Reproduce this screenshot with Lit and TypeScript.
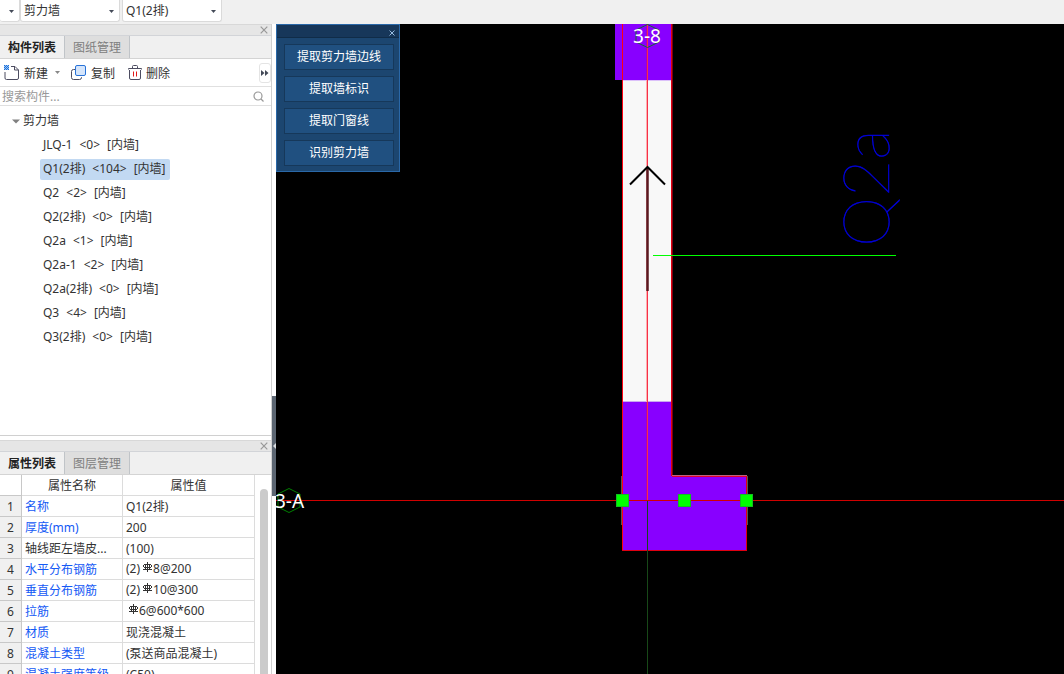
import { LitElement, html, css, svg, nothing } from "lit";
import { customElement, property, state } from "lit/decorators.js";
import { classMap } from "lit/directives/class-map.js";

const closeIcon = html`<svg width="8" height="8" viewBox="0 0 8 8" aria-hidden="true">
  <path d="M.7 .7L7.3 7.3M7.3 .7L.7 7.3" fill="none" stroke="currentColor" stroke-width="1.2" />
</svg>`;

const newIcon = html`<svg width="16" height="16" viewBox="0 0 16 16" aria-hidden="true">
  <path d="M7 1.5H11L14.5 5V13Q14.5 14.5 13 14.5H2.500Q1 14.500 1 13V7" fill="none" stroke="#4c4c60" />
  <path d="M10.500 1.500V5H14.500" fill="none" stroke="#4c4c60" />
  <rect width="5" height="5" fill="#9cc4f4" />
  <path d="M0 0h1v1h-1zM2 0h1v1h-1zM4 0h1v1h-1zM1 1h1v1h-1zM3 1h1v1h-1zM0 2h1v1h-1zM2 2h1v1h-1zM4 2h1v1h-1zM1 3h1v1h-1zM3 3h1v1h-1zM0 4h1v1h-1zM2 4h1v1h-1zM4 4h1v1h-1z" fill="#1a6fd8" />
</svg>`;

const copyIcon = html`<svg width="16" height="16" viewBox="0 0 16 16" aria-hidden="true">
  <path d="M4 4.500H2.500Q.5 4.500 .5 6.500V12.500Q.5 14.500 2.500 14.500H8.500Q10.500 14.500 10.500 12.500V12" fill="none" stroke="#4c4c60" />
  <rect x="4.500" y=".5" width="10" height="10" rx="1.500" fill="#d5e5fb" stroke="#2872d8" />
</svg>`;

const deleteIcon = html`<svg width="14" height="16" viewBox="0 0 14 16" aria-hidden="true">
  <path d="M.5 4.500V3.500H13.500V4.500M4.500 3V1.500Q4.500 .5 5.500 .5H8.500Q9.500 .5 9.500 1.500V3M1.500 5V13Q1.500 14.500 3 14.500H11Q12.500 14.500 12.500 13V5" fill="none" stroke="#4c4c60" />
  <path d="M5.500 6.500V11.500M8.500 6.500V11.500" stroke="#e01818" fill="none" />
</svg>`;

const rebarIcon = html`<svg class="rebar" width="9" height="10" viewBox="0 0 9 10" role="img" aria-label="HRB400">
  <path d="M4.500 0V10M2.500 2V8M6.500 2V8M0 7.500H9M1 2.500H8M1 5.500H8M.5 3V5M8.500 3V5" fill="none" stroke="#333" />
</svg>`;

@customElement("dock-title")
class DockTitle extends LitElement {
  @property({ type: Array }) tabs: string[] = [];
  @state() private active = 0;

  static styles = css`
    :host { display: block; flex: none; }
    .bar { display: flex; justify-content: flex-end; align-items: center; height: 12px; box-sizing: border-box; padding-right: 3px; background: #e6e6e6; border-top: 1px solid #d8d8d8; border-bottom: 1px solid #d2d4d8; }
    .close { display: flex; border: 0; padding: 0; background: none; color: #989898; }
    .tabs { display: flex; height: 23px; background: #f0f0f0; border-bottom: 1px solid #d4d4d4; box-sizing: border-box; }
    .tab { width: 65px; border: 0; border-right: 1px solid #c0c4c8; padding: 2px 0 0; background: #dedede; color: #808080; font: 12px/18px "Noto Sans", "Noto Sans CJK SC", sans-serif; white-space: nowrap; }
    .tab.on { background: #f0f0f0; color: #222; font-weight: 700; }
  `;

  render() {
    return html`
      <div class="bar"><button class="close" aria-label="关闭">${closeIcon}</button></div>
      <div class="tabs" role="tablist">
        ${this.tabs.map((t, i) => html`<button role="tab" aria-selected=${i === this.active}
          class=${classMap({ tab: true, on: i === this.active })} @click=${() => (this.active = i)}>${t}</button>`)}
      </div>`;
  }
}

interface Row { name: string; value: string; prefix?: string; rebar?: boolean; plain?: boolean }

const rows: Row[] = [
  { name: "名称", value: "Q1(2排)" },
  { name: "厚度(mm)", value: "200" },
  { name: "轴线距左墙皮...", value: "(100)", plain: true },
  { name: "水平分布钢筋", prefix: "(2)", rebar: true, value: "8@200" },
  { name: "垂直分布钢筋", prefix: "(2)", rebar: true, value: "10@300" },
  { name: "拉筋", rebar: true, value: "6@600*600" },
  { name: "材质", value: "现浇混凝土" },
  { name: "混凝土类型", value: "(泵送商品混凝土)" },
  { name: "混凝土强度等级", value: "(C50)" },
];

const walls: [string, number][] = [
  ["JLQ-1", 0], ["Q1(2排)", 104], ["Q2", 2], ["Q2(2排)", 0], ["Q2a", 1],
  ["Q2a-1", 2], ["Q2a(2排)", 0], ["Q3", 4], ["Q3(2排)", 0],
];

@customElement("drawing-view")
class DrawingView extends LitElement {
  static styles = css`
    :host { display: block; min-width: 0; overflow: hidden; background: #000; }
    .sheet { display: block; width: 100%; height: 100%; }
    .axis { font: 19px "Noto Sans", "Noto Sans CJK SC", sans-serif; fill: #fff; }
    .mark { font: 100 64px Lato, sans-serif; fill: #0000e0; stroke: #0000e0; stroke-width: .5; }
  `;

  render() {
    return html`<svg class="sheet" role="img" aria-label="剪力墙平面图">
      <g shape-rendering="crispEdges">
        <path d="M339 0H396V56H339Z" fill="#8800ff" />
        <path d="M346 56H396V378H346Z" fill="#f8f8f8" />
        <path d="M346 378H396V452H470V526H346Z" fill="#8800ff" />
        <path d="M346 377.500H396" stroke="#c9a8f0" />
        <path d="M346 56.500H396" stroke="#dcc0fa" />
        <path d="M345.500 452V501M471.500 452V501" stroke="#555" />
        <path d="M346.500 0V526" stroke="#ff0010" />
        <path d="M395.500 0V452" stroke="#e00010" />
        <path d="M396.500 0V452" stroke="#780010" />
        <path d="M396 451.500H471" stroke="#c06080" />
        <path d="M396 452.500H471" stroke="#e00030" />
        <path d="M470.500 452V527M346 526.500H471" stroke="#e00010" fill="none" />
        <path d="M0 476.500H2000" stroke="#d00000" />
        <path d="M370.500 56V378" stroke="#fcb0b0" />
        <path d="M370.500 0V56M370.500 378V476" stroke="#a800c0" />
        <path d="M371.500 0V476" stroke="#f83048" />
        <path d="M371.500 477V2000" stroke="#184818" />
        <path d="M377 231.500H620" stroke="#00ff00" />
      </g>
      <path d="M371.500 144V267" stroke="#5a1820" stroke-width="2.500" />
      <path d="M354 160.500L371.500 143L389 160.500" stroke="#000" stroke-width="2" fill="none" />
      <path d="M371.500 .5L383 6V18L371.500 23.500L360 18V6Z" stroke="#107030" fill="none" />
      <path d="M13 464.500L24 470V483L13 488.500L2 483V470Z" stroke="#008000" fill="none" />
      ${[346, 408, 470].map(x => svg`<rect x=${x - 5.5} y="470.5" width="12" height="12" fill="#00ff00" stroke="#10c020" />`)}
      <text class="axis" x="371" y="19" text-anchor="middle">3-8</text>
      <text class="axis" x="-1" y="484">3-A</text>
      <text class="mark" transform="translate(613 223) rotate(-90)">Q2a</text>
    </svg>`;
  }
}

@customElement("app-root")
class AppRoot extends LitElement {
  @state() private selected = 1;

  static styles = css`
    :host { display: flex; flex-direction: column; height: 100vh; overflow: hidden; background: #f0f0f0; color: #333; font: 12px/18px "Noto Sans", "Noto Sans CJK SC", sans-serif; }
    button, input, select { font: inherit; color: inherit; }
    .top { display: flex; gap: 2px; height: 24px; flex: none; }
    .pick { display: grid; width: 100px; height: 22px; }
    .pick.short { width: 18px; }
    .pick > * { grid-area: 1 / 1; }
    .pick select { appearance: none; width: 100%; min-width: 0; box-sizing: border-box; padding: 0 16px 0 3px; border: 1px solid #dadada; border-top: 0; border-radius: 0 0 3px 3px; background: #fff; outline: 0; }
    .pick svg { justify-self: end; align-self: center; margin-right: 6px; pointer-events: none; }
    .pick.short select { border-left: 0; }
    .main { display: flex; flex: 1; min-height: 0; }
    .side { display: flex; flex-direction: column; width: 271px; flex: none; gap: 4px; background: #fff; border-right: 1px solid #d0d0d0; }
    .panel { display: flex; flex-direction: column; background: #fff; }
    .components { height: 412px; flex: none; box-sizing: border-box; border-bottom: 1px solid #d0d0d0; }
    .props { flex: 1; min-height: 0; }
    .tools { display: flex; align-items: center; height: 28px; box-sizing: border-box; padding: 0 0 0 4px; border-bottom: 1px solid #e0e0e0; }
    .tool { display: flex; align-items: center; gap: 4px; border: 0; padding: 0; background: none; }
    .tool span { padding-top: 2px; }
    .tool.new { margin-right: 11px; }
    .tool.copy { margin-right: 13px; }
    .tool.new > svg:last-child { margin-left: 3px; }
    .more { display: grid; place-items: center; margin-left: auto; width: 12px; height: 20px; padding: 0; border: 1px solid #e4e4e4; border-radius: 3px; background: #fff; }
    .search { display: flex; align-items: center; height: 19px; box-sizing: border-box; padding: 0 7px 0 2px; border-bottom: 1px solid #e0e0e0; }
    .search input { flex: 1; min-width: 0; border: 0; padding: 2px 0 0; outline: 0; background: none; height: 18px; box-sizing: border-box; }
    .search input::placeholder { color: #999; opacity: 1; }
    .tree { list-style: none; margin: 0; padding: 3px 0 0 12px; }
    .root { display: flex; align-items: center; gap: 3px; height: 24px; border: 0; padding: 0; background: none; }
    .kids { list-style: none; margin: 0; padding: 0 0 0 28px; }
    .kids li { height: 24px; display: flex; align-items: center; }
    .item { height: 21px; border: 0; border-radius: 2px; padding: 0 4px 0 3px; background: none; white-space: nowrap; display: flex; align-items: center; gap: 7px; }
    .item.on { background: #c2d9f2; }
    .sheet { display: flex; flex: 1; min-height: 0; overflow: hidden; align-items: flex-start; }
    .grid { width: 255px; table-layout: fixed; border-collapse: separate; border-spacing: 0; }
    .grid th, .grid td { box-sizing: border-box; height: 21px; padding: 2px 0 0 3px; font-weight: 400; text-align: left; white-space: nowrap; overflow: hidden; border: solid #dcdcdc; border-width: 0 1px 1px 0; }
    .grid thead th { text-align: center; padding: 2px 0 0; }
    .grid .num { width: 22px; padding: 2px 0 0; text-align: center; border-color: #c8c8c8; }
    .grid tbody .num { background: #f0f0f0; }
    .grid .name { width: 101px; }
    .grid tbody .name { color: #1459f5; }
    .grid tbody .name.plain { color: #333; }
    .grid .steel { padding-top: 0; }
    .rebar { margin: 0 1px 0 3px; vertical-align: 1px; }
    .thumb { width: 8px; margin: 14px 0 0 5px; align-self: stretch; border-radius: 4px 4px 0 0; background: #cbcbcb; }
    .split { flex: none; width: 4px; background: #fff; }
    .grip { display: grid; place-items: center end; width: 4px; height: 100px; margin-top: 372px; border: 0; padding: 0; background: #5c6672; }
    .stage { display: grid; flex: 1; min-width: 0; grid-template: 1fr / 1fr; }
    .stage > * { grid-area: 1 / 1; }
    .float { align-self: start; justify-self: start; z-index: 1; width: 124px; box-sizing: border-box; border: 1px solid #2a68a8; background: #1c4670; }
    .cap { display: flex; justify-content: flex-end; align-items: center; height: 13px; padding: 3px 4px 0 0; box-sizing: border-box; background: #17375a; border-bottom: 1px solid #102c48; }
    .cap button { display: flex; border: 0; padding: 0; background: none; color: #a8cdf0; }
    .cap svg { width: 6px; height: 6px; }
    .acts { display: grid; gap: 6px; padding: 6px 5px 5px 7px; }
    .acts button { height: 26px; padding: 0; border: 1px solid #16385a; background: #205080; color: #fff; }
  `;

  private arrow(color = "#444a58") {
    return html`<svg width="5" height="3" viewBox="0 0 5 3" aria-hidden="true"><path d="M0 0H5L2.500 3Z" fill=${color} /></svg>`;
  }

  private pick(label: string, text: string) {
    return html`<div class=${classMap({ pick: true, short: !text })}>
      <select aria-label=${label}><option>${text}</option></select>${this.arrow()}
    </div>`;
  }

  render() {
    return html`
      <header class="top">${this.pick("类别", "")}${this.pick("构件类型", "剪力墙")}${this.pick("构件", "Q1(2排)")}</header>
      <main class="main">
        <aside class="side">
          <section class="panel components">
            <dock-title .tabs=${["构件列表", "图纸管理"]}></dock-title>
            <div class="tools">
              <button class="tool new">${newIcon}<span>新建</span>${this.arrow("#888")}</button>
              <button class="tool copy">${copyIcon}<span>复制</span></button>
              <button class="tool">${deleteIcon}<span>删除</span></button>
              <button class="more" aria-label="更多">
                <svg width="8" height="6" viewBox="0 0 8 6" aria-hidden="true"><path d="M0 0L3.500 3L0 6ZM4 0L7.500 3L4 6Z" fill="#444a58" /></svg>
              </button>
            </div>
            <div class="search">
              <input type="text" aria-label="搜索构件" placeholder="搜索构件..." />
              <svg width="11" height="11" viewBox="0 0 11 11" aria-hidden="true"><circle cx="5" cy="5" r="4" fill="none" stroke="#999" stroke-width="1.200" /><path d="M8 8L10.500 10.500" stroke="#999" stroke-width="1.200" /></svg>
            </div>
            <ul class="tree">
              <li>
                <button class="root"><svg width="8" height="5" viewBox="0 0 8 5" aria-hidden="true"><path d="M0 .5H8L4 4.500Z" fill="#808080" /></svg>剪力墙</button>
                <ul class="kids">
                  ${walls.map(([name, count], i) => html`<li><button class=${classMap({ item: true, on: i === this.selected })}
                    @click=${() => (this.selected = i)}><span>${name}</span><span>&lt;${count}&gt;</span><span>[内墙]</span></button></li>`)}
                </ul>
              </li>
            </ul>
          </section>
          <section class="panel props">
            <dock-title .tabs=${["属性列表", "图层管理"]}></dock-title>
            <div class="sheet">
              <table class="grid">
                <thead><tr><th class="num"></th><th class="name">属性名称</th><th>属性值</th></tr></thead>
                <tbody>
                  ${rows.map((r, i) => html`<tr>
                    <th class="num" scope="row">${i + 1}</th>
                    <td class=${classMap({ name: true, plain: !!r.plain })}>${r.name}</td>
                    <td class=${classMap({ steel: !!r.rebar })}>${r.prefix ?? nothing}${r.rebar ? rebarIcon : nothing}${r.value}</td>
                  </tr>`)}
                </tbody>
              </table>
              <div class="thumb"></div>
            </div>
          </section>
        </aside>
        <div class="split">
          <button class="grip" aria-label="折叠面板"><svg width="3" height="6" viewBox="0 0 3 6" aria-hidden="true"><path d="M3 0V6L0 3Z" fill="#d8dce0" /></svg></button>
        </div>
        <div class="stage">
          <drawing-view></drawing-view>
          <section class="float" aria-label="识别">
            <div class="cap"><button aria-label="关闭">${closeIcon}</button></div>
            <div class="acts">
              ${["提取剪力墙边线", "提取墙标识", "提取门窗线", "识别剪力墙"].map(t => html`<button>${t}</button>`)}
            </div>
          </section>
        </div>
      </main>`;
  }
}
